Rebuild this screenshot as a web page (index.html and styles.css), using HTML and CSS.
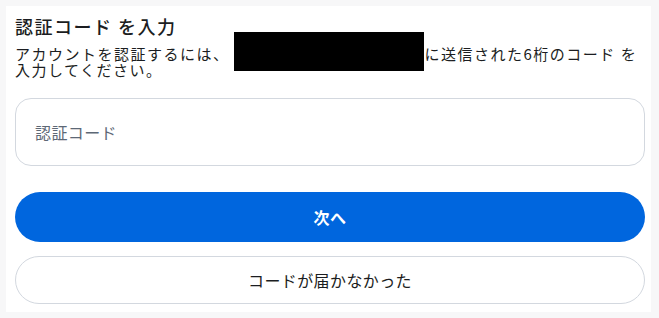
FILE: index.html
```html
<!DOCTYPE html>
<html lang="ja">
<head>
<meta charset="utf-8">
<link rel="stylesheet" href="styles.css">
</head>
<body>
<main class="card">
  <h1 class="title">認証コード を入力</h1>
  <p class="desc">アカウントを認証するには、<span class="redact"></span>に送信された6桁のコード を<br>入力してください。</p>
  <div class="field"><span class="placeholder">認証コード</span></div>
  <button class="btn btn-primary">次へ</button>
  <button class="btn btn-secondary">コードが届かなかった</button>
</main>
</body>
</html>
```
FILE: styles.css
```css
html, body {
  margin: 0;
  padding: 0;
}
body {
  background: #f7f7f8;
  font-family: "Noto Sans CJK JP", "Noto Sans", "Liberation Sans", sans-serif;
  color: #1b1d21;
  width: 659px;
  height: 318px;
  overflow: hidden;
}
.card {
  margin: 6px 0 0 6px;
  width: 645px;
  height: 306px;
  box-sizing: border-box;
  background: #ffffff;
  padding: 8px 6px 0 9px;
  display: flex;
  flex-direction: column;
}
.title {
  margin: 0 0 8px 0;
  font-size: 18px;
  line-height: 24px;
  font-weight: 500;
  letter-spacing: 1.5px;
}
.desc {
  margin: 0;
  font-size: 15px;
  line-height: 16px;
  letter-spacing: 1.5px;
  white-space: nowrap;
}
.redact {
  display: inline-block;
  width: 190px;
  height: 39px;
  background: #000;
  vertical-align: top;
  margin: -14px 1px -9px 4px;
}
.field {
  margin-top: 20px;
  height: 68px;
  box-sizing: border-box;
  border: 1px solid #d3d8df;
  border-radius: 16px;
  display: flex;
  align-items: center;
  padding-left: 19px;
}
.placeholder {
  font-size: 16px;
  color: #5d6876;
  letter-spacing: 0.4px;
}
.btn {
  font-family: inherit;
  font-size: 16px;
  width: 100%;
  border-radius: 999px;
  display: flex;
  align-items: center;
  justify-content: center;
  letter-spacing: 0.4px;
  padding: 0;
  box-sizing: border-box;
}
.btn-primary {
  margin-top: 26px;
  height: 50px;
  background: #0066de;
  color: #ffffff;
  border: none;
  font-weight: 700;
}
.btn-secondary {
  margin-top: 14px;
  height: 48px;
  background: #ffffff;
  color: #1b1d21;
  border: 1px solid #d3d8df;
  font-weight: 400;
}
```
